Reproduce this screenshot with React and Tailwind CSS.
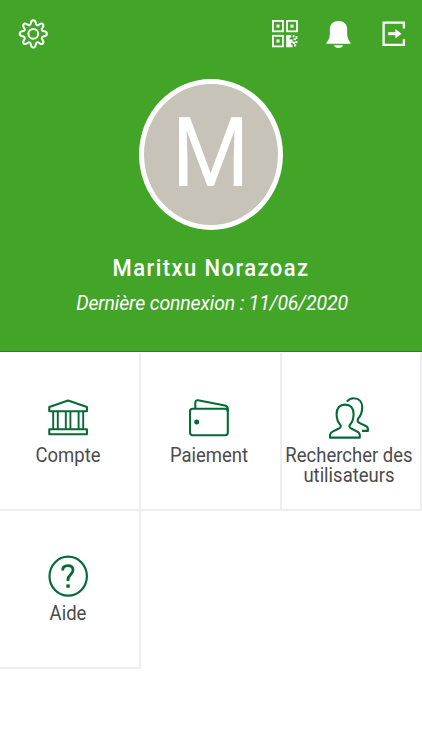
const GearIcon = () => (
    <svg className="w-8 h-8" viewBox="0 0 32 32" fill="none" stroke="white" strokeWidth="2" strokeLinejoin="round">
        <path d="M13.6 5.9 C14.2 1.1 18.4 1.1 19 5.9 C19.3 7.3 20.7 7.7 21.7 6.9 C25.4 3.9 28 6.6 25.2 10.3 C24.3 11.5 24.9 12.9 26.3 13.1 C31.1 13.7 31.1 17.9 26.3 18.5 C24.9 18.7 24.3 20.1 25.2 21.3 C28 25 25.4 27.7 21.7 24.7 C20.7 23.9 19.3 24.3 19 25.7 C18.4 30.9 14.2 30.9 13.6 25.7 C13.3 24.3 11.9 23.9 10.9 24.7 C7.2 27.7 4.6 25 7.4 21.3 C8.3 20.1 7.7 18.7 6.3 18.5 C1.5 17.9 1.5 13.7 6.3 13.1 C7.7 12.9 8.3 11.5 7.4 10.3 C4.6 6.6 7.2 3.9 10.9 6.9 C11.9 7.7 13.3 7.3 13.6 5.9 Z" />
        <circle cx="16.3" cy="15.8" r="4.9" />
    </svg>
);

const QrIcon = () => (
    <svg className="w-[26px] h-7" viewBox="0 0 26 28" fill="none" stroke="white" strokeWidth="1.8">
        <rect x="0.9" y="0.9" width="10" height="10.4" />
        <rect x="15" y="0.9" width="10" height="10.4" />
        <rect x="0.9" y="15.8" width="10" height="10.6" />
        <g fill="white" stroke="none">
            <rect x="4.5" y="4.6" width="3" height="3" />
            <rect x="18.5" y="4.6" width="3" height="3" />
            <rect x="4.5" y="19.5" width="3" height="3" />
            <path d="M14.2 15h5v2.6h-1.6v2h3v2.2h2.4v2.2h-2.2v-1.2h-1.8v2h1.6v2.4h-6.4z" />
            <rect x="20.8" y="15" width="1.7" height="2.4" />
            <rect x="23.6" y="16" width="1.8" height="3" />
            <rect x="21.6" y="18.6" width="2.4" height="1.6" />
            <rect x="23.4" y="21" width="2" height="2" />
            <rect x="22" y="24.2" width="2.2" height="2.2" />
        </g>
    </svg>
);

const BellIcon = () => (
    <svg className="w-[25px] h-7" viewBox="0 0 25 28" fill="white">
        <path d="M12.5 0 C7.4 0 3.9 3.1 3.9 8 V12 C3.9 16.5 2.6 19.4 0.5 21.4 C-0.1 22 0.1 22.8 1 22.8 H24 C24.9 22.8 25.1 22 24.5 21.4 C22.4 19.4 21.1 16.5 21.1 12 V8 C21.1 3.1 17.6 0 12.5 0 Z" />
        <path d="M8 24.2 H17 C16.4 26 14.7 27 12.5 27 C10.3 27 8.6 26 8 24.2 Z" />
    </svg>
);

const LogoutIcon = () => (
    <svg className="w-6 h-[26px]" viewBox="0 0 24 26" fill="none" stroke="white" strokeWidth="2.3">
        <path d="M21.9 7.4 V1.7 H1.6 V23.8 H21.9 V18.2" />
        <path d="M6.2 12.7 H15" strokeWidth="3" />
        <path d="M13.4 7.9 L19.6 12.7 L13.4 17.5 Z" fill="white" stroke="none" />
    </svg>
);

const BankIcon = () => (
    <svg className="w-10 h-10" viewBox="0 0 40 40" fill="none" stroke="#066a35" strokeWidth="2.1" strokeLinejoin="round">
        <path d="M1.3 12.3 V8.1 L20.1 1.5 L38.9 8.1 V12.3 Z" />
        <path d="M5.2 12.5 V30 M9.8 12.5 V30 M17.8 12.5 V30 M22.4 12.5 V30 M30.6 12.5 V30 M35.2 12.5 V30" strokeWidth="1.9" />
        <rect x="1.3" y="30.3" width="37.6" height="5" />
    </svg>
);

const WalletIcon = () => (
    <svg className="w-10 h-10" viewBox="0 0 40 40" fill="none" stroke="#066a35" strokeWidth="2.1" strokeLinejoin="round">
        <rect x="1" y="9.8" width="37.8" height="26.4" rx="2.6" />
        <path d="M6.3 9.6 V3.6 C6.3 1.9 7.4 1 9 1.3 L36 6.5 C38 7 38.8 8.1 38.8 10.1 V12.7" />
        <circle cx="7.7" cy="23" r="2.5" fill="#066a35" stroke="none" />
    </svg>
);

const UsersIcon = () => (
    <svg className="w-10 h-[42px] -mt-[2px]" viewBox="0 0 40 42" fill="none" stroke="#066a35" strokeWidth="2.1" strokeLinejoin="round">
        <path d="M1 40.6 V38.2 C1 36.2 2 35.2 4 34.4 L9.4 31.8 C11.5 30.9 12.2 29.5 11.4 28 C8.6 25 7.6 21.6 7.6 17 C7.6 11 10.9 7.6 16.1 7.6 C21.3 7.6 24.6 11 24.6 17 C24.6 21.6 23.6 25 20.8 28 C20 29.5 20.7 30.9 22.8 31.8 L27.8 34.4 C29.8 35.2 30.8 36.2 30.8 38.2 V40.6 Z" />
        <path d="M17.8 4.6 C19.5 2.4 21.8 1.2 24.7 1.2 C30 1.2 33.2 4.7 33.2 10.2 C33.2 14.5 31.8 18.8 29.2 21.5 C28 23.6 28.8 25.2 30.8 26.1 L36.3 28.8 C38 29.6 38.9 30.6 38.9 32.2 V33.9 H32.9" />
    </svg>
);

const HelpIcon = () => (
    <svg className="w-10 h-[42px] -mt-[2px]" viewBox="0 0 40 42" fill="none" stroke="#066a35">
        <ellipse cx="20.2" cy="21.2" rx="18.7" ry="19.5" strokeWidth="2.2" />
        <path d="M14.6 15.5 C14.6 12.2 16.7 10.6 19.9 10.6 C23.3 10.6 25 12.2 25 15.1 C25 19.2 20 20.2 20 24.2 V26" strokeWidth="2.8" />
        <rect x="18.3" y="29.4" width="3.5" height="3.3" fill="#066a35" stroke="none" />
    </svg>
);

const menuItems = [
    { name: "Compte", icon: <BankIcon />, cell: "pr-[3px]" },
    { name: "Paiement", icon: <WalletIcon />, cell: "pr-[3px]" },
    { name: "Rechercher des utilisateurs", icon: <UsersIcon />, cell: "pr-[4px]" },
    { name: "Aide", icon: <HelpIcon />, cell: "pr-[3px]" },
];

const App = () => {
    return (
        <div className="w-[422px] h-[750px] bg-white overflow-hidden font-[Roboto,sans-serif]">
            <header className="h-[352px] bg-[#42a528] border-b border-[#2f7d1c] text-white flex flex-col items-center">
                <div className="w-full h-[79px] pt-[18px] pl-[17px] pr-4 flex items-start justify-between">
                    <button><GearIcon /></button>
                    <div className="flex items-start pt-0.5">
                        <button className="mr-7"><QrIcon /></button>
                        <button className="mr-[31px] pt-px"><BellIcon /></button>
                        <button className="pt-px"><LogoutIcon /></button>
                    </div>
                </div>
                <div className="w-[144px] h-[151px] rounded-[50%] border-[5px] border-white bg-[#c8c3b9] flex items-center justify-center">
                    <span className="text-[89px] leading-none scale-y-[1.09] -mt-1 mr-px">M</span>
                </div>
                <h1 className="mt-[25px] text-[22px] leading-7 font-medium tracking-[1.42px] scale-y-[1.07] whitespace-nowrap">Maritxu Norazoaz</h1>
                <p className="mt-[7px] pl-0.5 text-[19.5px] leading-7 italic tracking-[-0.16px] scale-y-[1.07] whitespace-nowrap">Dernière connexion : 11/06/2020</p>
            </header>
            <main className="pt-px grid grid-cols-[141px_141px_140px]">
                {menuItems.map((item) => (
                    <button key={item.name} className={`h-[158px] pt-[46px] border-r-2 border-b-2 border-[#eeeeee] flex flex-col items-center ${item.cell}`}>
                        <div className="h-[42px]">{item.icon}</div>
                        <span className="mt-1.5 text-[18.5px] leading-[19px] text-[#4b4b4b] text-center scale-y-[1.08]">{item.name}</span>
                    </button>
                ))}
            </main>
        </div>
    );
};

export default App;
